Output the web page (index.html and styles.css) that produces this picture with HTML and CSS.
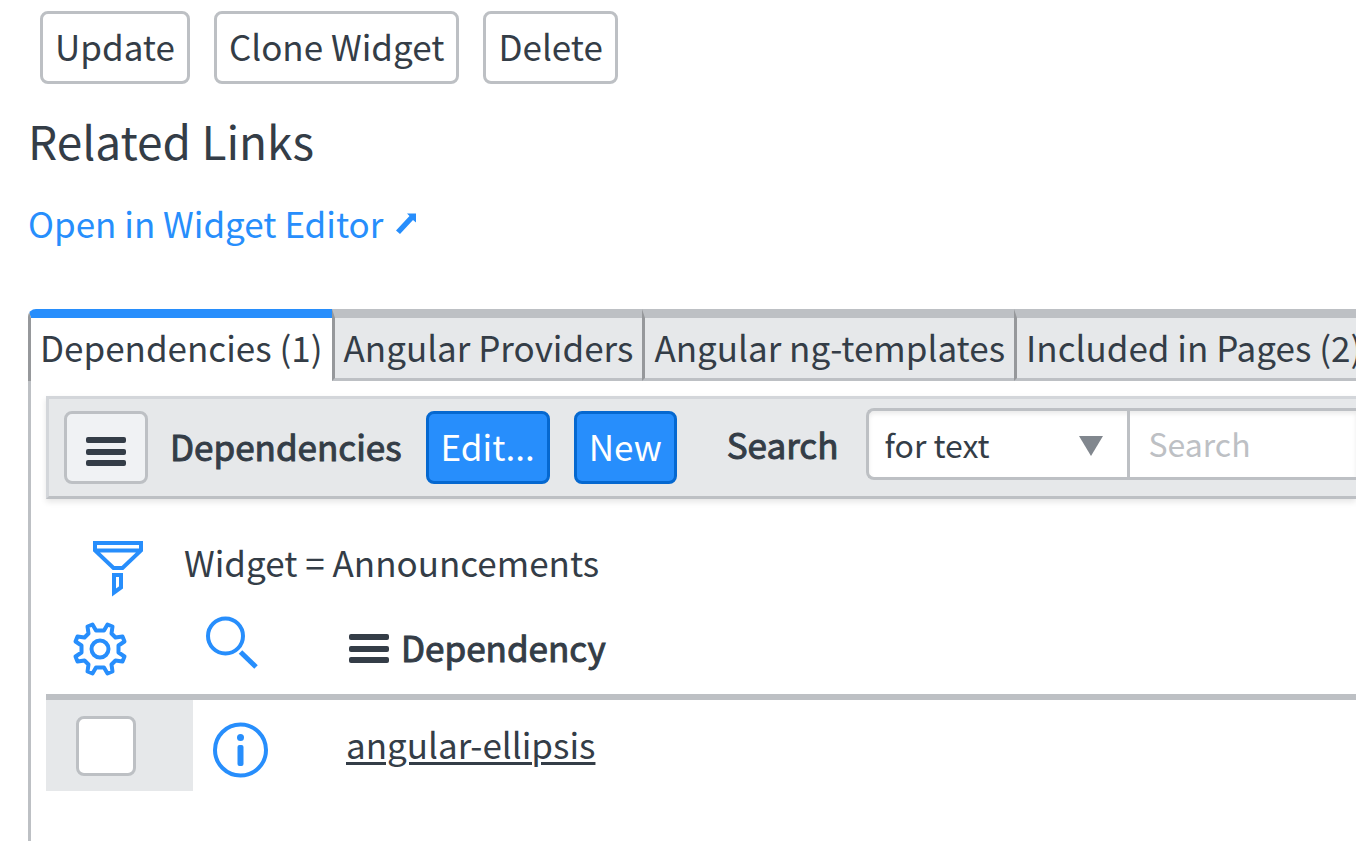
FILE: index.html
```
<!DOCTYPE html>
<html lang="en">

<head>
    <meta charset="UTF-8">
    <meta name="viewport" content="width=device-width, initial-scale=1.0">
    <title>Widget</title>
    <link rel="stylesheet" href="styles.css">
</head>

<body>
    <!-- Form actions -->
    <div class="actions">
        <button class="button">Update</button>
        <button class="button">Clone Widget</button>
        <button class="button">Delete</button>
    </div>

    <!-- Related links -->
    <section class="related">
        <h2 class="related-title">Related Links</h2>
        <a class="related-link" href="#">Open in Widget Editor
            <svg class="arrow" viewBox="0 0 24 24" aria-hidden="true">
                <path d="M12 2.500H21V11.500L18 9L5 23L1 19.500L14.500 5Z" fill="currentColor" />
            </svg>
        </a>
    </section>

    <!-- Related lists -->
    <div class="tabs" role="tablist">
        <button class="tab active" role="tab" aria-selected="true">Dependencies (1)</button>
        <button class="tab" role="tab">Angular Providers</button>
        <button class="tab" role="tab">Angular ng-templates</button>
        <button class="tab last" role="tab">Included in Pages (2)</button>
    </div>

    <main class="panel">
        <div class="toolbar">
            <button class="button menu" aria-label="Menu">
                <svg class="bars" viewBox="0 0 40 30" aria-hidden="true">
                    <rect y="0" width="40" height="6" rx="2" />
                    <rect y="12" width="40" height="6" rx="2" />
                    <rect y="23" width="40" height="6" rx="2" />
                </svg>
            </button>
            <h3 class="title">Dependencies</h3>
            <div class="toolbar-buttons">
                <button class="button primary">Edit...</button>
                <button class="button primary">New</button>
            </div>
            <div class="search">
                <label class="search-label" for="searchField">Search</label>
                <div class="search-box">
                    <div class="select-wrap">
                        <select class="select" id="searchField">
                            <option>for text</option>
                            <option>Dependency</option>
                        </select>
                        <svg class="caret" viewBox="0 0 24 20" aria-hidden="true">
                            <path d="M0 0H24L12 20Z" />
                        </svg>
                    </div>
                    <input class="search-input" type="text" placeholder="Search" aria-label="Search">
                </div>
            </div>
        </div>

        <div class="filter">
            <button class="icon-button" aria-label="Show filter">
                <svg class="icon funnel" viewBox="0 0 50 56" aria-hidden="true">
                    <path d="M2 2H48V9.500L29.500 27H20.500L2 9.500ZM2 9.500H48M21 34H28V46.500L21 51.500Z" />
                </svg>
            </button>
            <span class="filter-text">Widget = Announcements</span>
        </div>

        <table class="list">
            <thead>
                <tr>
                    <th class="col-check">
                        <button class="icon-button" aria-label="Personalize list">
                            <svg class="icon gear" viewBox="0 0 54 54" aria-hidden="true">
                                <circle cx="27" cy="27" r="8.500" />
                                <path d="M23 8.500H31L34.500 2.500L39.500 4.500L38.500 11.500L42.500 15.500L49.500 14.500L51.500 19.500L45.500 23.500V30.500L51.500 34.500L49.500 39.500L42.500 38.500L38.500 42.500L39.500 49.500L34.500 51.500L31 45.500H23L19.500 51.500L14.500 49.500L15.500 42.500L11.500 38.500L4.500 39.500L2.500 34.500L8.500 30.500V23.500L2.500 19.500L4.500 14.500L11.500 15.500L15.500 11.500L14.500 4.500L19.500 2.500Z" />
                            </svg>
                        </button>
                    </th>
                    <th class="col-info">
                        <button class="icon-button" aria-label="Search list">
                            <svg class="icon glass" viewBox="0 0 54 54" aria-hidden="true">
                                <circle cx="20.500" cy="20" r="17.500" />
                                <path d="M35.500 36L51 51" stroke-width="5" />
                            </svg>
                        </button>
                    </th>
                    <th>
                        <div class="heading">
                            <svg class="bars" viewBox="0 0 40 30" aria-hidden="true">
                                <rect y="0" width="40" height="6" rx="2" />
                                <rect y="12" width="40" height="6" rx="2" />
                                <rect y="23" width="40" height="6" rx="2" />
                            </svg>
                            <span class="title">Dependency</span>
                        </div>
                    </th>
                </tr>
            </thead>
            <tbody>
                <tr>
                    <td class="col-check checked-cell">
                        <input class="checkbox" type="checkbox" aria-label="Select angular-ellipsis">
                    </td>
                    <td class="col-info">
                        <button class="icon-button" aria-label="Preview record">
                            <svg class="icon info" viewBox="0 0 56 56" aria-hidden="true">
                                <circle cx="27.500" cy="28" r="25.500" />
                                <circle class="dot" cx="27.500" cy="15.500" r="3.500" />
                                <rect class="dot" x="24.500" y="23" width="6" height="21" rx="2" />
                            </svg>
                        </button>
                    </td>
                    <td class="col-name"><a class="record" href="#">angular-ellipsis</a></td>
                </tr>
            </tbody>
        </table>
    </main>
</body>

</html>
```
FILE: styles.css
```
* {
    box-sizing: border-box;
}

body {
    font-family: "Noto Sans CJK SC", "Noto Sans", sans-serif;
    font-size: 35px;
    line-height: 52px;
    color: #343d47;
    background-color: #fff;
    margin: 0;
    min-height: 100vh;
    display: flex;
    flex-direction: column;
    overflow-x: hidden;
}

button,
input,
select {
    font: inherit;
    color: inherit;
}

.actions {
    display: flex;
    gap: 24px;
    padding: 11px 40px 0;
}

.button {
    flex: none;
    height: 73px;
    padding: 0 12px 4px;
    background-color: #fff;
    border: 3px solid #bdc0c4;
    border-radius: 8px;
    white-space: nowrap;
    cursor: pointer;
}

.button.primary {
    color: #fff;
    background-color: #278efc;
    border-color: #0568d0;
}

.button.menu {
    display: flex;
    align-items: center;
    justify-content: center;
    width: 84px;
    padding: 8px 0 0;
    background-color: #f0f2f4;
}

.related {
    padding: 22px 28px 0;
}

.related-title {
    font-size: 46px;
    font-weight: normal;
    line-height: 68px;
    margin: 0 0 23px;
}

.related-link {
    display: inline-flex;
    align-items: center;
    gap: 12px;
    color: #278efc;
    text-decoration: none;
}

.arrow {
    width: 24px;
    height: 24px;
}

.tabs {
    display: flex;
    margin: 60px 0 0 28px;
}

.tab {
    flex: none;
    height: 72px;
    padding: 0 9px 2px;
    background-color: #e6e8ea;
    border: 0 solid #bdc0c4;
    border-width: 9px 0 3px 3px;
    border-left-color: #96989b;
    white-space: nowrap;
    cursor: pointer;
}

.tab.active {
    padding-bottom: 5px;
    background-color: #fff;
    border-top-color: #278efc;
    border-bottom-width: 0;
    border-top-left-radius: 8px;
}

.tab.last {
    flex: 1;
    min-width: 0;
    padding-right: 0;
    text-align: left;
}

.panel {
    flex: 1;
    margin-left: 28px;
    padding: 15px 0 0 15px;
    border-left: 3px solid #bdc0c4;
}

.toolbar {
    display: flex;
    align-items: center;
    height: 103px;
    padding-left: 15px;
    background-color: #e6e8ea;
    border: 3px solid #d3d6da;
    border-right: none;
    border-bottom-color: #bdc0c4;
    box-shadow: 0 3px 6px rgba(0, 0, 0, 0.1);
}

.title,
.search-label {
    font-size: 35px;
    font-weight: normal;
    -webkit-text-stroke: 1px currentColor;
}

.title {
    margin: 0;
    padding-bottom: 4px;
}

.toolbar .title {
    margin-left: 22px;
}

.toolbar-buttons {
    display: flex;
    gap: 24px;
    margin: 0 50px 0 24px;
}

.search {
    display: flex;
    flex: 1;
    align-items: center;
    gap: 28px;
    min-width: 0;
    padding-bottom: 7px;
}

.search-box {
    display: flex;
    flex: 1;
    min-width: 0;
    height: 72px;
    font-size: 32px;
    background-color: #fff;
    border: 3px solid #bdc0c4;
    border-right: none;
    border-radius: 8px 0 0 8px;
    box-shadow: inset 0 3px 4px rgba(0, 0, 0, 0.08);
}

.select-wrap {
    position: relative;
    flex: none;
    width: 258px;
}

.select {
    appearance: none;
    width: 100%;
    height: 100%;
    padding: 0 60px 0 15px;
    background: none;
    border: none;
}

.caret {
    position: absolute;
    top: 25px;
    right: 24px;
    width: 24px;
    height: 20px;
    fill: #81878e;
    pointer-events: none;
}

.search-input {
    flex: 1;
    min-width: 0;
    padding: 0 18px 2px;
    background: none;
    border: none;
    border-left: 3px solid #bdc0c4;
}

.search-input::placeholder {
    color: #bdc0c4;
}

.filter {
    display: flex;
    align-items: flex-start;
    gap: 41px;
    padding: 42px 0 0 47px;
}

.filter-text {
    line-height: 42px;
}

.icon-button {
    display: block;
    padding: 0;
    background: none;
    border: none;
    cursor: pointer;
}

.icon {
    display: block;
    width: 54px;
    height: 54px;
    fill: none;
    stroke: #278efc;
    stroke-width: 4;
}

.funnel {
    width: 50px;
    height: 56px;
}

.gear {
    stroke-linejoin: round;
}

.info {
    width: 56px;
    height: 56px;
}

.info .dot {
    fill: #278efc;
    stroke: none;
}

.bars {
    width: 40px;
    height: 30px;
    fill: #343d47;
}

.list {
    width: 100%;
    border-spacing: 0;
    text-align: left;
}

.list th {
    height: 103px;
    padding: 6px 0 0;
    border-bottom: 6px solid #bdc0c4;
}

.list td {
    height: 91px;
    padding: 0;
}

.list .col-check {
    width: 147px;
    padding-left: 27px;
}

.list .col-info {
    width: 153px;
    padding-left: 12px;
}

.list th.col-info {
    padding-top: 0;
    padding-bottom: 6px;
}

.list .checked-cell {
    padding-left: 30px;
    background-color: #e6e8ea;
}

.list td.col-info {
    padding: 8px 0 0 20px;
}

.list .col-name {
    padding-bottom: 3px;
}

.heading {
    display: flex;
    align-items: center;
    gap: 12px;
    padding-left: 3px;
}

.checkbox {
    appearance: none;
    display: block;
    width: 60px;
    height: 60px;
    margin: 0;
    background-color: #fff;
    border: 3px solid #bdc0c4;
    border-radius: 8px;
}

.record {
    color: inherit;
    text-underline-offset: 3px;
    text-decoration-thickness: 3px;
}
```
